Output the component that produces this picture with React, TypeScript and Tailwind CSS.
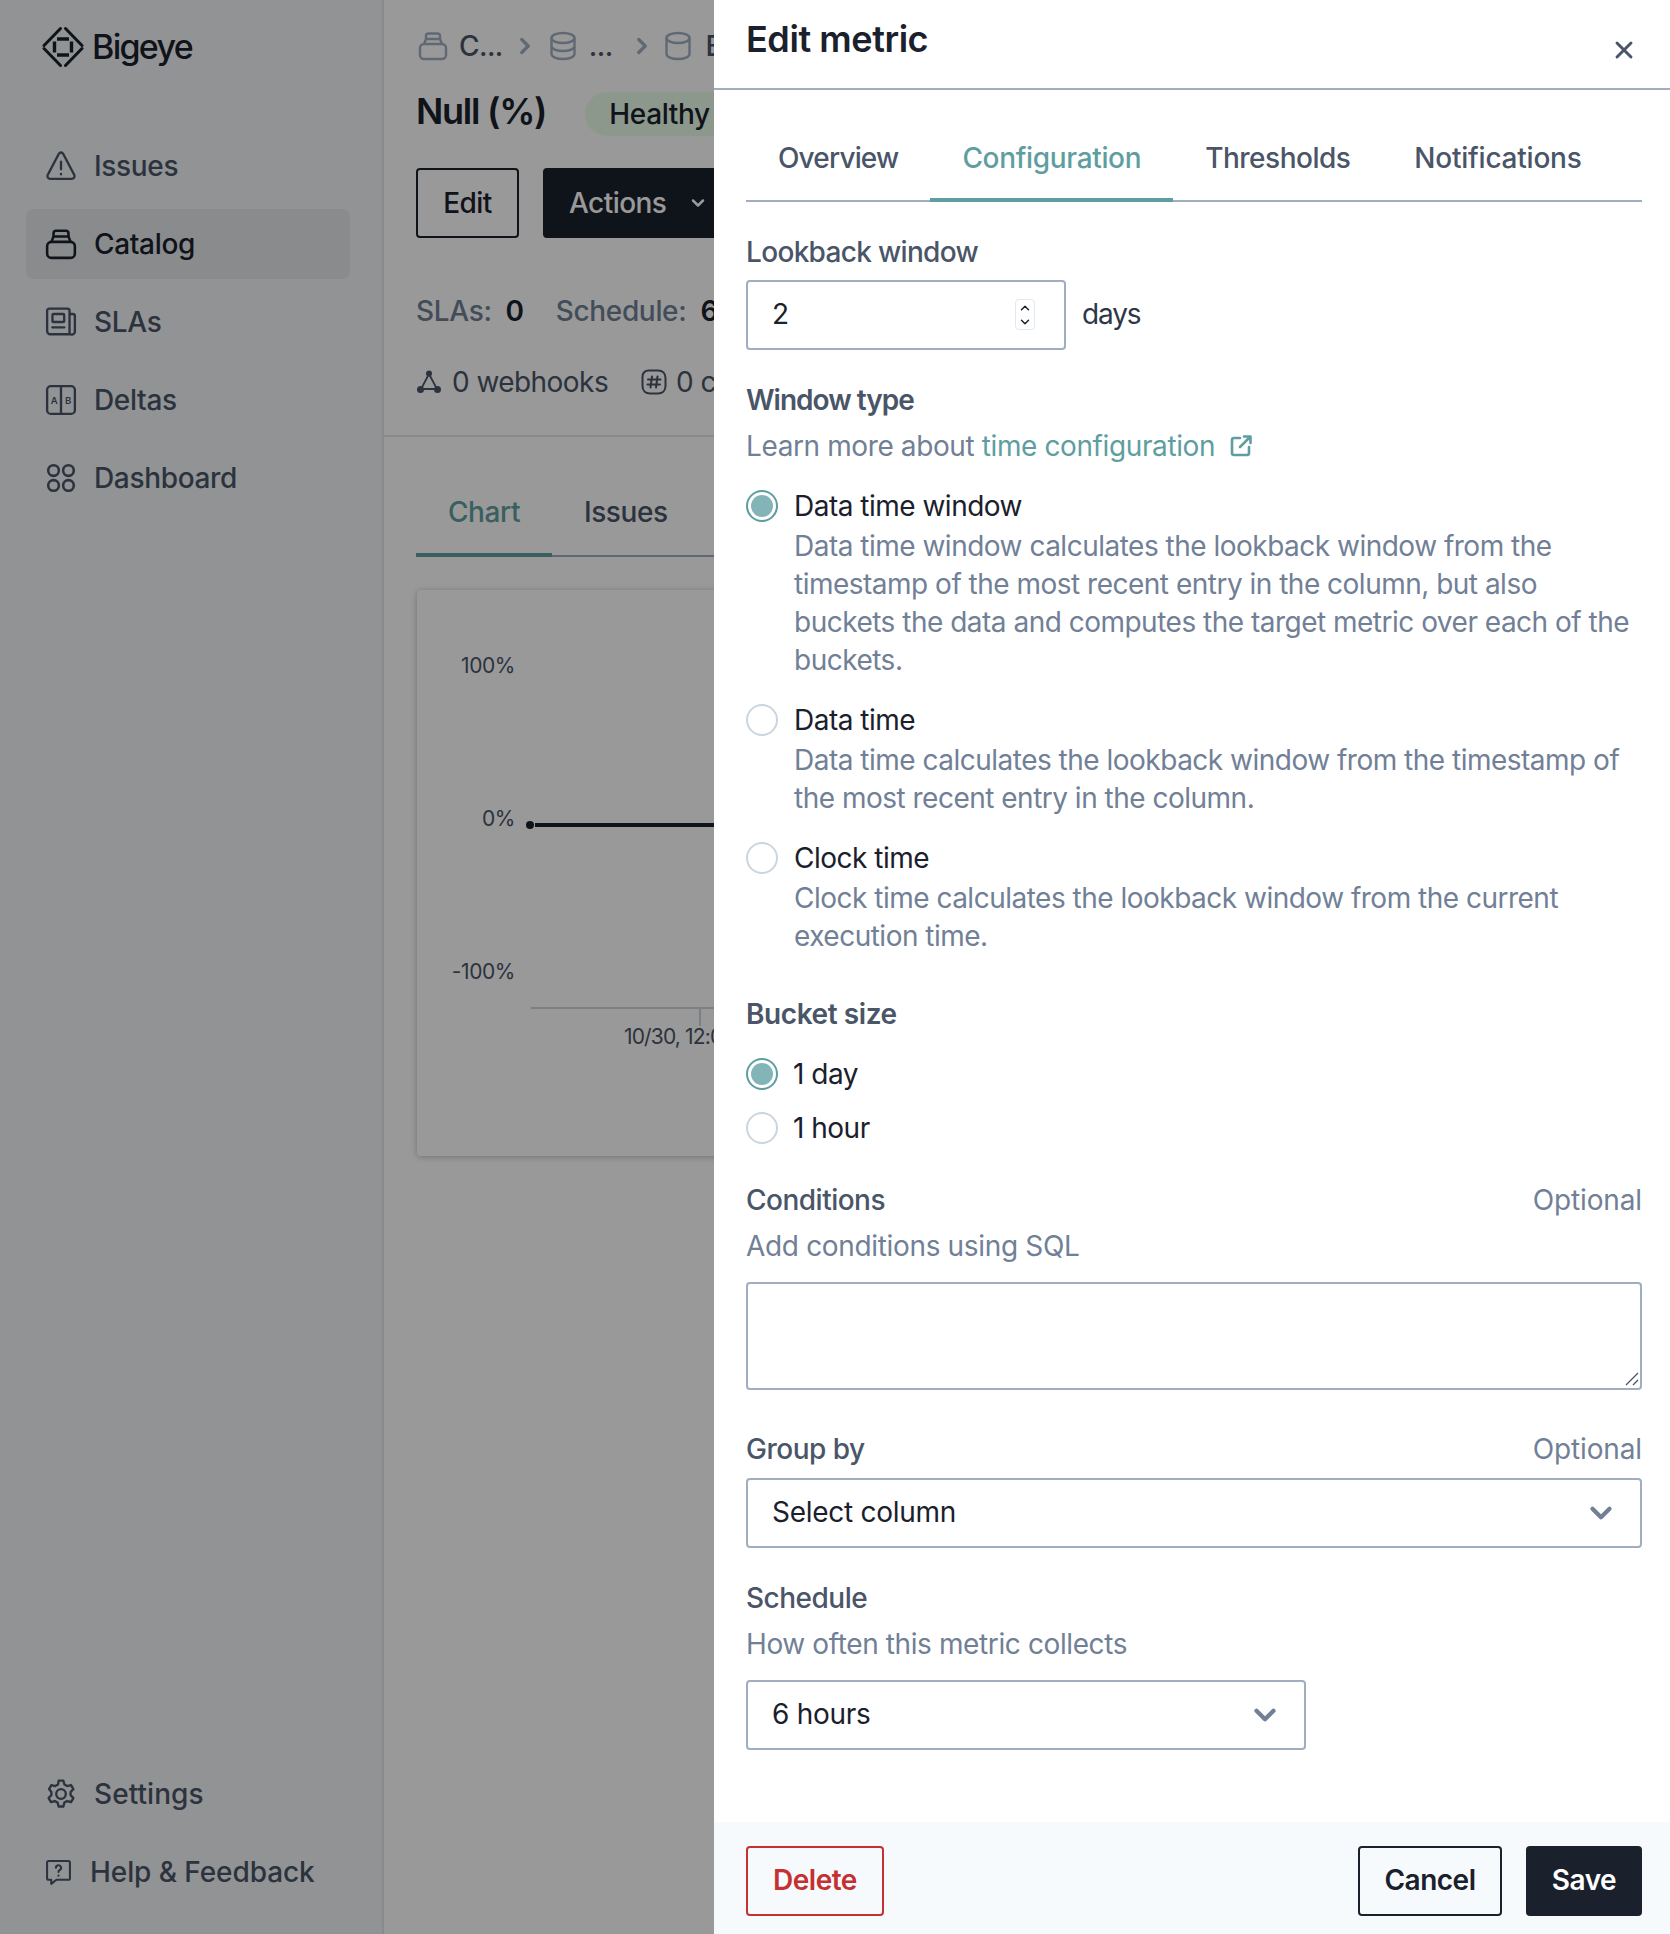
import { ChevronDown, ChevronRight, ChevronUp, X } from 'lucide-react'
import type { ReactNode } from 'react'

const CatalogIcon = ({ className }: { className?: string }) => (
  <svg viewBox="0 0 30 30" fill="none" stroke="currentColor" strokeWidth="2.4" strokeLinejoin="round" className={className}>
    <rect x="2" y="13" width="26" height="15" rx="4" />
    <path d="M6 13l2-5h14l2 5" />
    <path d="M8 8V5a2.5 2.5 0 0 1 2.5-2.5h9A2.5 2.5 0 0 1 22 5v3" />
  </svg>
)

const IssuesIcon = ({ className }: { className?: string }) => (
  <svg viewBox="0 0 30 30" fill="none" stroke="currentColor" strokeWidth="2.2" strokeLinecap="round" strokeLinejoin="round" className={className}>
    <path d="M13 3.5 2.5 23.5A2.5 2.5 0 0 0 4.8 27h20.4a2.5 2.5 0 0 0 2.3-3.5L17 3.5a2.3 2.3 0 0 0-4 0Z" />
    <path d="M15 11v7M15 22.5v.2" />
  </svg>
)

const SlaIcon = ({ className }: { className?: string }) => (
  <svg viewBox="0 0 30 30" fill="none" stroke="currentColor" strokeWidth="2.2" strokeLinejoin="round" strokeLinecap="round" className={className}>
    <path d="M23 26.5H5a3 3 0 0 1-3-3V4.500a2 2 0 0 1 2-2h17a2 2 0 0 1 2 2v22Zm0-19h3a2 2 0 0 1 2 2v14a3 3 0 0 1-5 2.500" />
    <rect x="7" y="7.500" width="11" height="7.500" rx="1" />
    <path d="M7 20h11" />
  </svg>
)

const DeltasIcon = ({ className }: { className?: string }) => (
  <svg viewBox="0 0 30 30" fill="none" stroke="currentColor" strokeWidth="2.200" strokeLinejoin="round" className={className}>
    <rect x="2" y="2" width="26" height="26" rx="3.500" />
    <path d="M15 2v26" />
    <text x="8.500" y="19" textAnchor="middle" fontSize="9" fontWeight="600" stroke="none" fill="currentColor" fontFamily="Inter, sans-serif">A</text>
    <text x="21.500" y="19" textAnchor="middle" fontSize="9" fontWeight="600" stroke="none" fill="currentColor" fontFamily="Inter, sans-serif">B</text>
  </svg>
)

const DashboardIcon = ({ className }: { className?: string }) => (
  <svg viewBox="0 0 30 30" fill="none" stroke="currentColor" strokeWidth="2.400" className={className}>
    <ellipse cx="8" cy="8" rx="5" ry="5" />
    <ellipse cx="22" cy="8" rx="5" ry="5" />
    <ellipse cx="8" cy="22" rx="5" ry="5" />
    <ellipse cx="22" cy="22" rx="5" ry="5" />
  </svg>
)

const GearIcon = ({ className }: { className?: string }) => (
  <svg viewBox="0 0 30 30" fill="none" stroke="currentColor" strokeWidth="2.200" strokeLinejoin="round" className={className}>
    <path d="M12.800 2.500h4.400l1 3.600 2.600 1.500 3.600-1 2.200 3.800-2.600 2.700v3l2.600 2.700-2.200 3.800-3.600-1-2.600 1.500-1 3.600h-4.400l-1-3.600-2.600-1.500-3.600 1-2.200-3.800 2.600-2.700v-3L3.800 10.400 6 6.600l3.600 1 2.600-1.500 .6-3.600Z" />
    <circle cx="15" cy="15" r="4.500" />
  </svg>
)

const HelpIcon = ({ className }: { className?: string }) => (
  <svg viewBox="0 0 26 26" fill="none" stroke="currentColor" strokeWidth="2" strokeLinejoin="round" strokeLinecap="round" className={className}>
    <path d="M3.500 2h19A1.500 1.500 0 0 1 24 3.500v15a1.500 1.500 0 0 1-1.500 1.500H11l-5 4v-4H3.500A1.500 1.500 0 0 1 2 18.500v-15A1.500 1.500 0 0 1 3.500 2Z" />
    <path d="M10.500 8.500a2.500 2.500 0 1 1 3.500 2.300c-.7.4-1 .9-1 1.700M13 16v.1" />
  </svg>
)

const DatabaseIcon = ({ className }: { className?: string }) => (
  <svg viewBox="0 0 28 30" fill="none" stroke="currentColor" strokeWidth="2.400" className={className}>
    <ellipse cx="14" cy="7" rx="11.500" ry="5" />
    <path d="M2.500 7v16c0 2.800 5 5 11.500 5s11.500-2.200 11.500-5V7M2.500 15c0 2.800 5 5 11.500 5s11.500-2.200 11.500-5" />
  </svg>
)

const CylinderIcon = ({ className }: { className?: string }) => (
  <svg viewBox="0 0 28 30" fill="none" stroke="currentColor" strokeWidth="2.400" className={className}>
    <ellipse cx="14" cy="7" rx="11.500" ry="5" />
    <path d="M2.500 7v16c0 2.800 5 5 11.500 5s11.500-2.200 11.500-5V7" />
  </svg>
)

const WebhookIcon = ({ className }: { className?: string }) => (
  <svg viewBox="0 0 26 26" fill="none" stroke="currentColor" strokeWidth="1.800" className={className}>
    <path d="M13 5 5 20h16L13 5Z" />
    <circle cx="13" cy="4.500" r="3" fill="currentColor" stroke="none" />
    <circle cx="4.500" cy="20.500" r="3.500" fill="currentColor" stroke="none" />
    <circle cx="21.500" cy="20.500" r="3.500" fill="currentColor" stroke="none" />
  </svg>
)

const SlackIcon = ({ className }: { className?: string }) => (
  <svg viewBox="0 0 28 28" fill="none" stroke="currentColor" strokeWidth="2" strokeLinecap="round" className={className}>
    <path d="M9 2.500h9c4.500 0 7.500 3 7.500 7.500v8c0 4.500-3 7.500-7.500 7.500H10c-4.500 0-7.500-3-7.500-7.500v-9C2.500 5 5 2.500 9 2.500Z" />
    <path d="M12 8.500 10.500 19.500M17.500 8.500 16 19.500M8 11.500h12.500M7.500 16.500h12.500" />
  </svg>
)

const ExternalIcon = ({ className }: { className?: string }) => (
  <svg viewBox="0 0 24 24" fill="none" stroke="currentColor" strokeWidth="2.600" strokeLinecap="round" strokeLinejoin="round" className={className}>
    <path d="M11 4H5a2 2 0 0 0-2 2v13a2 2 0 0 0 2 2h13a2 2 0 0 0 2-2v-6" />
    <path d="M15 2.500h6.500V9M21 3 11 13" />
  </svg>
)

const Logo = () => (
  <svg viewBox="0 0 42 42" fill="none" stroke="#1a202c" className="w-[42px] h-[42px]">
    <path strokeWidth="3" strokeLinecap="round" d="M2 19.500 18.500 2.500M23.500 2.500 40 19.500M40 22.500 23.500 39.500M18.500 39.500 2 22.500" />
    <path strokeWidth="3.400" d="M15 13h12M15 29h12M12.500 15.500v11M29.500 15.500v11" />
  </svg>
)

const navItems = [
  { label: 'Issues', icon: IssuesIcon },
  { label: 'Catalog', icon: CatalogIcon, active: true },
  { label: 'SLAs', icon: SlaIcon },
  { label: 'Deltas', icon: DeltasIcon },
  { label: 'Dashboard', icon: DashboardIcon },
]

const Sidebar = () => (
  <aside className="w-[384px] shrink-0 h-full bg-[#f4f5f7] border-r-2 border-[#e2e8f0] flex flex-col pl-[26px]">
    <div className="flex items-center gap-[8px] pl-[16px] h-[94px]">
      <Logo />
      <span className="text-[34px] font-medium tracking-[-0.05em] text-[#1a202c] leading-[42px]">Bigeye</span>
    </div>
    <nav className="flex flex-col gap-[8px] mt-[37px] w-[324px]">
      {navItems.map(({ label, icon: Icon, active }) => (
        <div
          key={label}
          className={`flex items-center gap-[17px] h-[70px] pl-[19px] rounded-[8px] text-[28px] font-medium tracking-[-0.012em] ${active ? 'bg-[#e6e8ec] text-[#1a202c]' : 'text-[#4a5568]'}`}
        >
          <Icon className="w-[32px] h-[32px] shrink-0" />
          {label}
        </div>
      ))}
    </nav>
    <div className="mt-auto mb-[27px] flex flex-col gap-[8px] w-[324px]">
      <div className="flex items-center gap-[17px] h-[70px] pl-[19px] text-[28px] font-medium tracking-[0.002em] text-[#4a5568]">
        <GearIcon className="w-[32px] h-[32px] shrink-0" />
        Settings
      </div>
      <div className="flex items-center gap-[18px] h-[70px] pl-[19px] text-[28px] font-medium tracking-[-0.003em] text-[#4a5568]">
        <HelpIcon className="w-[27px] h-[27px] shrink-0" />
        Help &amp; Feedback
      </div>
    </div>
  </aside>
)

const Chart = () => (
  <svg width="1100" height="564" className="block tracking-[-0.02em]" fontFamily="Inter, sans-serif" fontSize="21" fill="#4a5568">
    <text x="98" y="83" textAnchor="end">100%</text>
    <text x="98" y="236" textAnchor="end">0%</text>
    <text x="98" y="389" textAnchor="end">-100%</text>
    <circle cx="113" cy="235" r="4" fill="#1a202c" />
    <path d="M118 235H1100" stroke="#1a202c" strokeWidth="4" />
    <path d="M114 418H1100" stroke="#cbd5e0" strokeWidth="2" />
    <path d="M283 418v18" stroke="#cbd5e0" strokeWidth="2" />
    <text x="207" y="454" className="tracking-[-0.04em]">10/30, 12:00</text>
  </svg>
)

const MainContent = () => (
  <main className="flex-1 min-w-0 h-full bg-white overflow-hidden">
    <div className="border-b-2 border-[#e2e8f0] pl-[32px] pt-[27px] h-[437px]">
      <div className="flex items-center h-[38px] text-[28px] font-medium text-[#4a5568] whitespace-nowrap tracking-[-0.02em]">
        <CatalogIcon className="w-[30px] h-[30px] ml-[2px] text-[#a0aec0]" />
        <span className="ml-[11px]">C...</span>
        <ChevronRight className="w-[26px] h-[26px] text-[#a0aec0] ml-[9px]" strokeWidth={3} />
        <DatabaseIcon className="w-[28px] h-[32px] text-[#a0aec0] ml-[11px]" />
        <span className="ml-[12px]">...</span>
        <ChevronRight className="w-[26px] h-[26px] text-[#a0aec0] ml-[16px]" strokeWidth={3} />
        <CylinderIcon className="w-[28px] h-[32px] text-[#a0aec0] ml-[9px]" />
        <span className="ml-[14px]">BIGEYE</span>
      </div>
      <div className="flex items-center mt-[24px] h-[44px] whitespace-nowrap">
        <h1 className="text-[36px] font-semibold tracking-[-0.035em] text-[#1a202c] leading-[44px]">Null (%)</h1>
        <span className="relative top-[3px] ml-[39px] h-[44px] px-[24px] rounded-full bg-[#ecfdeb] text-[28px] font-medium tracking-[-0.012em] text-[#1a202c] flex items-center">Healthy</span>
      </div>
      <div className="flex gap-[24px] mt-[35px] text-[28px] font-medium tracking-[-0.02em] whitespace-nowrap">
        <button className="w-[103px] h-[70px] border-2 border-[#1a202c] rounded-[4px] text-[#1a202c]">Edit</button>
        <button className="w-[220px] h-[70px] bg-[#1a202c] rounded-[4px] text-white flex items-center pl-[26px] gap-[22px]">
          Actions
          <ChevronDown className="w-[20px] h-[20px]" strokeWidth={3} />
        </button>
      </div>
      <div className="flex items-center mt-[54px] h-[38px] text-[28px] font-medium tracking-[-0.012em] text-[#718096] whitespace-nowrap">
        SLAs:
        <span className="ml-[14px] font-semibold text-[#1a202c]">0</span>
        <span className="ml-[32px]">Schedule:</span>
        <span className="ml-[14px] font-semibold text-[#1a202c]">6 hours</span>
      </div>
      <div className="flex items-center mt-[33px] h-[38px] text-[28px] tracking-[-0.02em] text-[#4a5568] whitespace-nowrap">
        <WebhookIcon className="w-[26px] h-[26px] mr-[10px]" />
        0 webhooks
        <SlackIcon className="w-[28px] h-[28px] ml-[32px] mr-[8px]" />
        0 channels
      </div>
    </div>
    <div className="pl-[32px] pt-[56px]">
      <div className="flex border-b-2 border-[#a0aec0] text-[28px] font-medium tracking-[-0.015em] h-[64px]">
        <span className="w-[136px] h-[64px] text-center leading-[38px] border-b-4 border-[#5f9ea0] text-[#5f9ea0]">Chart</span>
        <span className="pl-[32px] pr-[32px] leading-[38px] text-[#4a5568]">Issues</span>
      </div>
      <div className="ml-px mt-[33px] w-[1200px] h-[566px] bg-white rounded-[4px] shadow-[0_1px_6px_rgba(0,0,0,0.25)] overflow-hidden">
        <Chart />
      </div>
    </div>
  </main>
)

const Radio = ({ checked }: { checked?: boolean }) => (
  <span className={`w-[32px] h-[32px] rounded-full shrink-0 flex items-center justify-center border-2 ${checked ? 'border-[#5f9ea0]' : 'border-[#cbd5e0]'}`}>
    {checked && <span className="w-[22px] h-[22px] rounded-full bg-[#83b4b8]" />}
  </span>
)

const WindowOption = ({ label, checked, lines }: { label: string; checked?: boolean; lines: string[] }) => (
  <div>
    <div className="flex items-center gap-[16px] h-[38px]">
      <Radio checked={checked} />
      <span className="text-[#1a202c]">{label}</span>
    </div>
    <div className="mt-[2px] pl-[48px] text-[#718096] whitespace-nowrap">
      {lines.map((line) => (
        <div key={line}>{line}</div>
      ))}
    </div>
  </div>
)

const Label = ({ children, optional }: { children: ReactNode; optional?: boolean }) => (
  <div className="flex justify-between h-[38px]">
    <span className="font-medium text-[#4a5568]">{children}</span>
    {optional && <span className="text-[#718096] tracking-[-0.005em]">Optional</span>}
  </div>
)

const SelectBox = ({ value, className }: { value: string; className: string }) => (
  <div className={`h-[70px] border-2 border-[#a0aec0] rounded-[4px] pl-[24px] pr-[22px] flex items-center justify-between text-[#1a202c] tracking-[-0.01em] ${className}`}>
    <span className="pb-[2px]">{value}</span>
    <ChevronDown className="w-[34px] h-[34px] text-[#718096]" strokeWidth={3} />
  </div>
)

const EditPanel = () => (
  <section className="absolute top-0 right-0 bottom-0 w-[956px] bg-white flex flex-col text-[28px] leading-[38px] tracking-[-0.018em]">
    <header className="h-[90px] shrink-0 border-b-2 border-[#a0aec0] pl-[32px] pr-[32px] flex justify-between">
      <h2 className="mt-[18px] text-[36px] leading-[42px] font-semibold tracking-[-0.012em] text-[#1a202c]">Edit metric</h2>
      <X className="mt-[36px] w-[28px] h-[28px] text-[#4a5568]" strokeWidth={2.5} />
    </header>
    <div className="flex-1 pl-[32px] pr-[28px]">
      <div className="mt-[33px] h-[79px] flex border-b-2 border-[#a0aec0] font-medium text-[#4a5568]">
        <span className="px-[32px] pt-[16px] tracking-[-0.03em]">Overview</span>
        <span className="px-[32px] pt-[16px] h-[79px] border-b-4 border-[#5f9ea0] text-[#5f9ea0] tracking-[-0.012em]">Configuration</span>
        <span className="px-[32px] pt-[16px]">Thresholds</span>
        <span className="px-[32px] pt-[16px] tracking-[-0.008em]">Notifications</span>
      </div>

      <div className="mt-[31px] font-medium text-[#4a5568] tracking-[-0.024em]">Lookback window</div>
      <div className="mt-[9px] flex items-center gap-[16px]">
        <div className="relative w-[320px] h-[70px] border-2 border-[#a0aec0] rounded-[4px] pl-[24px] flex items-center text-[#1a202c]">
          <span className="pb-[2px]">2</span>
          <div className="absolute right-[29px] top-[17px] w-[20px] h-[31px] rounded-[4px] border border-[#e2e8f0] flex flex-col items-center justify-center">
            <ChevronUp className="w-[14px] h-[14px]" strokeWidth={2.5} />
            <ChevronDown className="w-[14px] h-[14px]" strokeWidth={2.5} />
          </div>
        </div>
        <span className="text-[#2d3748] pb-[2px] tracking-[-0.04em]">days</span>
      </div>

      <div className="mt-[31px] font-semibold text-[#4a5568] tracking-[-0.035em]">Window type</div>
      <div className="mt-[8px] flex items-center text-[#718096] tracking-[-0.014em]">
        Learn more about&nbsp;<span className="text-[#5f9ea0]">time configuration</span>
        <ExternalIcon className="ml-[14px] w-[24px] h-[24px] text-[#5f9ea0]" />
      </div>

      <div className="mt-[22px] flex flex-col gap-[22px]">
        <WindowOption
          label="Data time window"
          checked
          lines={[
            'Data time window calculates the lookback window from the',
            'timestamp of the most recent entry in the column, but also',
            'buckets the data and computes the target metric over each of the',
            'buckets.',
          ]}
        />
        <WindowOption
          label="Data time"
          lines={[
            'Data time calculates the lookback window from the timestamp of',
            'the most recent entry in the column.',
          ]}
        />
        <WindowOption
          label="Clock time"
          lines={[
            'Clock time calculates the lookback window from the current',
            'execution time.',
          ]}
        />
      </div>

      <div className="mt-[40px] font-semibold text-[#4a5568] tracking-[-0.015em]">Bucket size</div>
      <div className="mt-[22px] flex flex-col gap-[16px] text-[#1a202c]">
        <div className="flex items-center gap-[15px]">
          <Radio checked />1 day
        </div>
        <div className="flex items-center gap-[15px]">
          <Radio />1 hour
        </div>
      </div>

      <div className="mt-[34px]">
        <Label optional>Conditions</Label>
      </div>
      <div className="mt-[8px] text-[#718096] tracking-[-0.012em]">Add conditions using SQL</div>
      <div className="relative mt-[17px]">
        <textarea className="block w-full h-[108px] border-2 border-[#a0aec0] rounded-[4px] outline-none resize-none" />
        <svg viewBox="0 0 14 14" className="absolute right-[3px] bottom-[4px] w-[14px] h-[14px]" stroke="#4a5568" strokeWidth="1.300" fill="none">
          <path d="M1 13 13 1M8 13l5-5" />
        </svg>
      </div>

      <div className="mt-[40px]">
        <Label optional>Group by</Label>
      </div>
      <SelectBox value="Select column" className="mt-[10px] w-full" />

      <div className="mt-[31px]">
        <Label>Schedule</Label>
      </div>
      <div className="mt-[8px] text-[#718096] tracking-[-0.014em]">How often this metric collects</div>
      <SelectBox value="6 hours" className="mt-[17px] w-[560px]" />
    </div>
    <footer className="h-[112px] shrink-0 bg-[#f7fafc] pl-[32px] pr-[28px] pt-[24px] flex justify-between font-semibold">
      <button className="w-[138px] h-[70px] border-2 border-[#c53030] rounded-[4px] text-[#c53030] pb-[2px]">Delete</button>
      <div className="flex gap-[24px]">
        <button className="w-[144px] h-[70px] border-2 border-[#1a202c] rounded-[4px] text-[#1a202c] pb-[2px]">Cancel</button>
        <button className="w-[116px] h-[70px] bg-[#1a202c] rounded-[4px] text-white pb-[2px]">Save</button>
      </div>
    </footer>
  </section>
)

export default function App() {
  return (
    <div className="relative w-[1670px] h-[1934px] overflow-hidden flex font-['Inter',sans-serif]">
      <Sidebar />
      <MainContent />
      <div className="absolute inset-0 bg-black/40" />
      <EditPanel />
    </div>
  )
}
